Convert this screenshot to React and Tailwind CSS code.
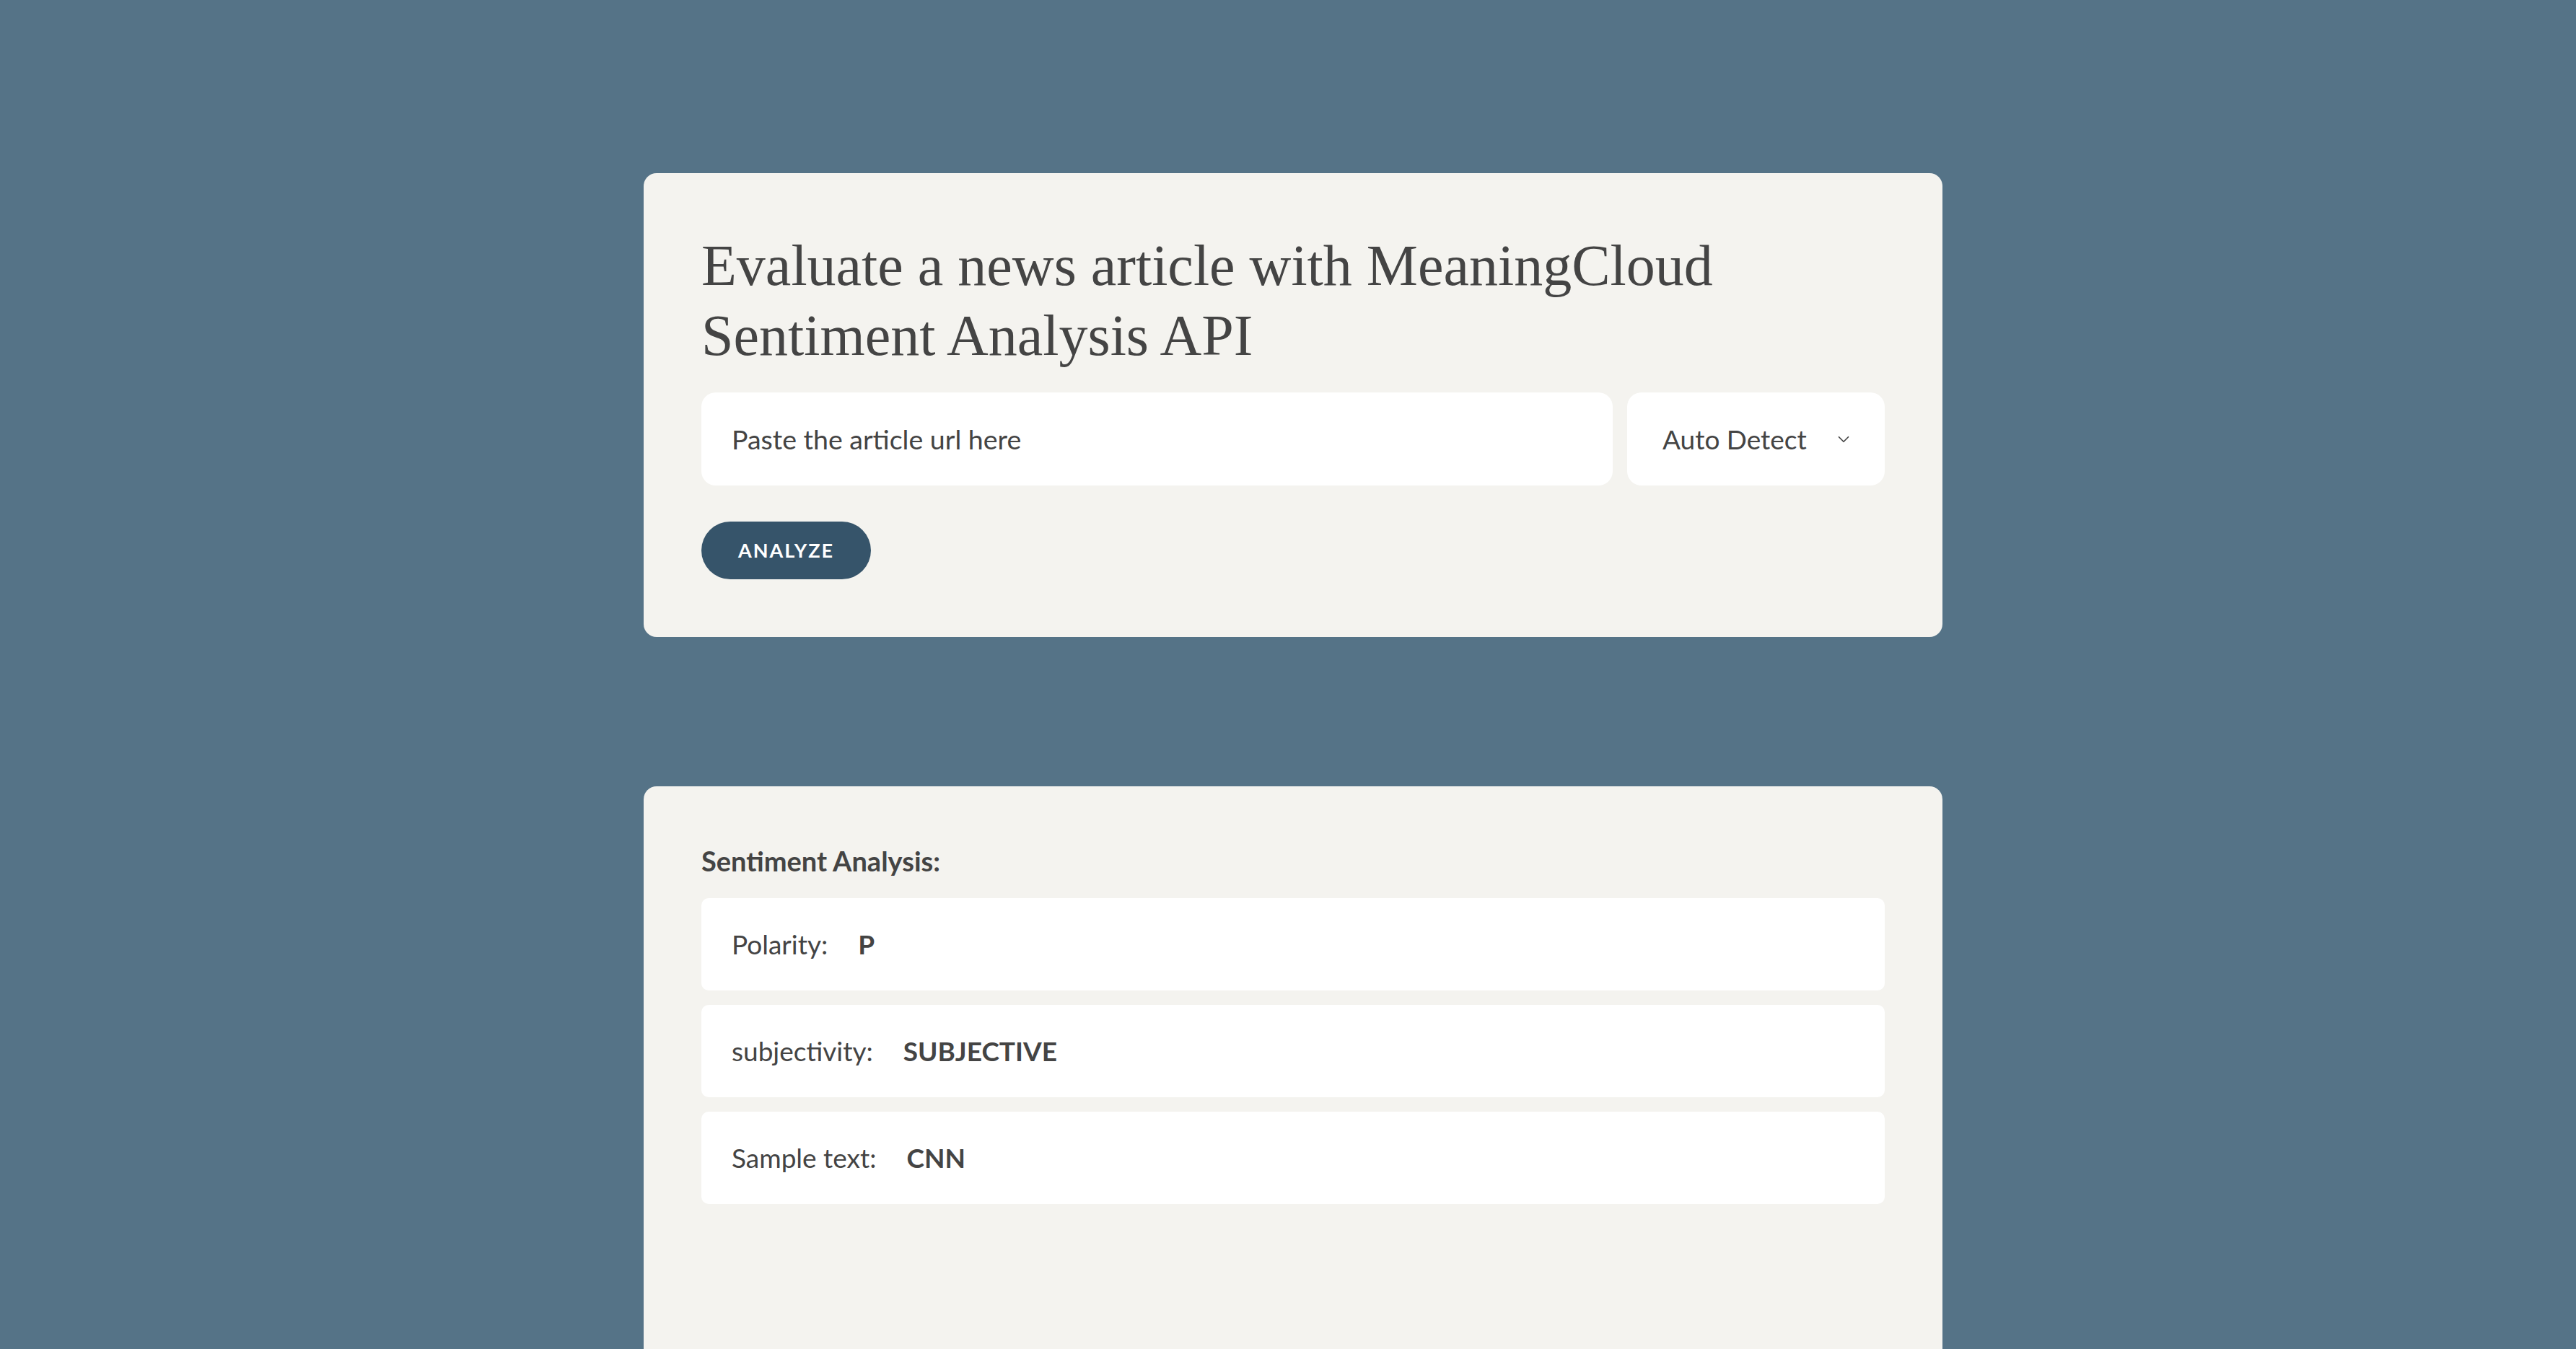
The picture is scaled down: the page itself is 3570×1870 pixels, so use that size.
import { ChevronDown } from 'lucide-react'

const body = { fontFamily: 'Lato, "Noto Sans", sans-serif' }

const results = [
  { label: 'Polarity:', value: 'P' },
  { label: 'subjectivity:', value: 'SUBJECTIVE' },
  { label: 'Sample text:', value: 'CNN' },
]

export default function App() {
  return (
    <div className="min-h-screen bg-[#557387] pl-[14px] text-[#444]" style={body}>
      <div className="mx-auto flex w-[1800px] flex-col gap-[207px] pt-[240px]">
        {/* Form card */}
        <section className="rounded-[18px] bg-[#f4f3ef] p-[80px]">
          <h1
            className="mb-[30px] text-[80px] font-normal leading-[97px] text-[#444]"
            style={{ fontFamily: '"Liberation Serif", "Times New Roman", serif' }}
          >
            Evaluate a news article with MeaningCloud Sentiment Analysis API
          </h1>
          <div className="flex gap-[20px]">
            <input
              type="text"
              placeholder="Paste the article url here"
              className="h-[129px] flex-1 rounded-[20px] bg-white px-[42px] text-[37.5px] text-[#444] outline-none placeholder:text-[#444]"
            />
            <div className="flex h-[129px] w-[357px] items-center justify-between rounded-[20px] bg-white pl-[49px] pr-[44px] text-[37px]">
              <span>Auto Detect</span>
              <ChevronDown size={26} strokeWidth={1.6} />
            </div>
          </div>
          <button className="mt-[50px] h-[80px] w-[235px] rounded-full bg-[#36546a] text-[27px] font-bold tracking-[2px] text-white">
            ANALYZE
          </button>
        </section>

        {/* Results card */}
        <section className="min-h-[800px] rounded-[18px] bg-[#f4f3ef] px-[80px] pt-[77px]">
          <h2 className="mb-[26px] text-[38px] font-bold leading-[52px]">Sentiment Analysis:</h2>
          <div className="flex flex-col gap-[20px]">
            {results.map(r => (
              <div key={r.label} className="flex h-[128px] items-center rounded-[10px] bg-white px-[42px] text-[37px]">
                <span className="mr-[42px]">{r.label}</span>
                <span className="font-bold">{r.value}</span>
              </div>
            ))}
          </div>
        </section>
      </div>
    </div>
  )
}
